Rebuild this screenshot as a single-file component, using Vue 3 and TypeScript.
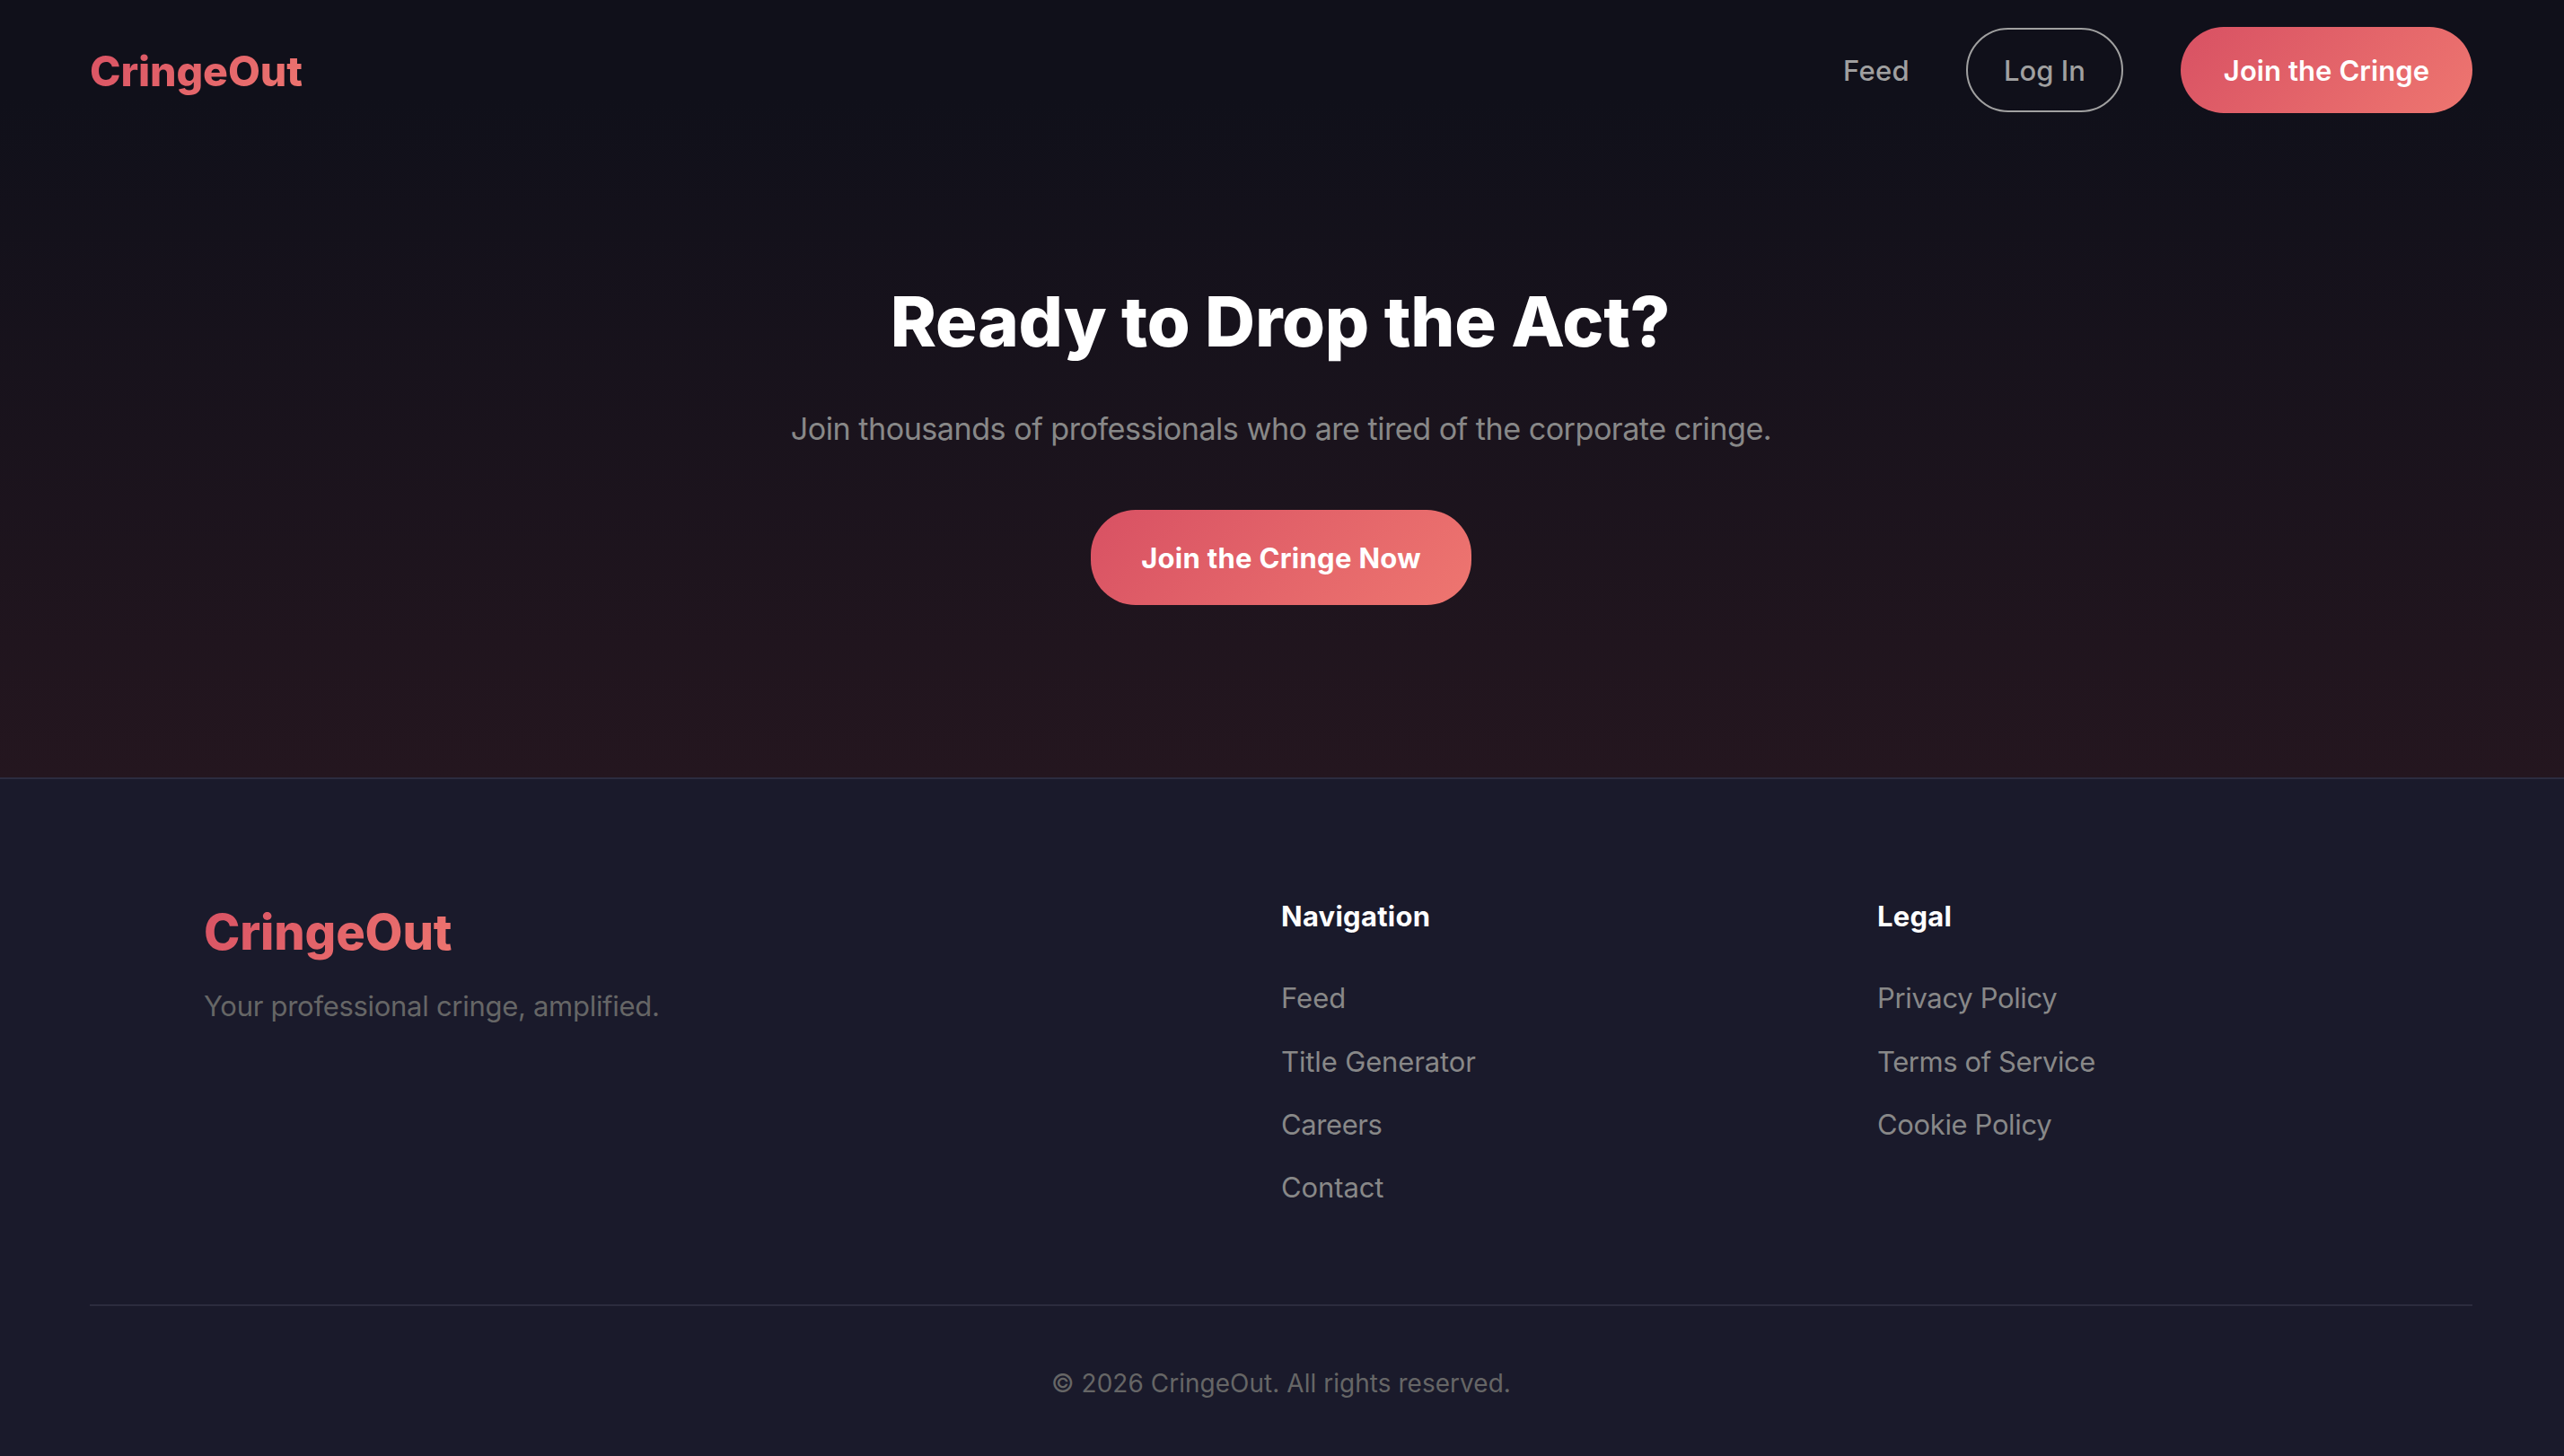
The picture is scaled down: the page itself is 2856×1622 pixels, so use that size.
<script setup lang="ts">
interface FooterLink {
  label: string
  tracking: number
}
interface FooterColumn {
  title: string
  links: FooterLink[]
}

const columns: FooterColumn[] = [
  {
    title: 'Navigation',
    links: [
      { label: 'Feed', tracking: 0.05 },
      { label: 'Title Generator', tracking: -0.13 },
      { label: 'Careers', tracking: -0.4 },
      { label: 'Contact', tracking: -0.1 },
    ],
  },
  {
    title: 'Legal',
    links: [
      { label: 'Privacy Policy', tracking: -0.34 },
      { label: 'Terms of Service', tracking: -0.42 },
      { label: 'Cookie Policy', tracking: -0.36 },
    ],
  },
]
</script>

<template>
  <div class="page">
    <div class="top">
      <nav class="nav">
        <a class="logo">CringeOut</a>
        <div class="nav-links">
          <a class="nav-link">Feed</a>
          <a class="login">Log In</a>
          <a class="join">Join the Cringe</a>
        </div>
      </nav>
      <section class="hero">
        <h2 class="hero-title">Ready to Drop the Act?</h2>
        <p class="hero-text">Join thousands of professionals who are tired of the corporate cringe.</p>
        <a class="cta">Join the Cringe Now</a>
      </section>
    </div>

    <footer class="footer">
      <div class="footer-grid">
        <div class="brand">
          <div class="logo footer-logo">CringeOut</div>
          <p class="tagline">Your professional cringe, amplified.</p>
        </div>
        <div v-for="column in columns" :key="column.title">
          <h4 class="column-title">{{ column.title }}</h4>
          <ul class="links">
            <li v-for="link in column.links" :key="link.label">
              <a :style="{ letterSpacing: link.tracking + 'px' }">{{ link.label }}</a>
            </li>
          </ul>
        </div>
      </div>
      <div class="footer-bottom">
        <p class="copyright">© 2026 CringeOut. All rights reserved.</p>
      </div>
    </footer>
  </div>
</template>

<style>
body {
  margin: 0;
  background: #1a1a2b;
}
</style>

<style scoped>
.page {
  box-sizing: border-box;
  min-height: 1622px;
  display: flex;
  flex-direction: column;
  font-family: Inter, 'Liberation Sans', sans-serif;
  color: #fff;
  background: #1a1a2b;
}
h2,
h4,
p,
ul {
  margin: 0;
  padding: 0;
}
.top {
  height: 866px;
  background: linear-gradient(180deg, #10101a 110px, #24161f 100%);
}
.nav {
  box-sizing: border-box;
  height: 156px;
  padding: 0 102px 0 100px;
  display: flex;
  align-items: center;
  justify-content: space-between;
}
.logo {
  font-size: 46.5px;
  font-weight: 800;
  line-height: 76px;
  letter-spacing: -0.12px;
  background: linear-gradient(135deg, #d85163 0%, #ee7670 100%);
  -webkit-background-clip: text;
  background-clip: text;
  color: transparent;
}
.nav > .logo {
  padding-top: 1px;
}
.nav-links {
  display: flex;
  align-items: center;
  font-size: 31px;
  font-weight: 500;
  color: #a0a0a0;
}
.nav-link {
  margin-right: 63px;
  line-height: 53px;
  padding-top: 1px;
  letter-spacing: 0.3px;
}
.login {
  box-sizing: border-box;
  width: 175px;
  height: 94px;
  margin-right: 64px;
  border: 2px solid #a0a0a0;
  border-radius: 50px;
  line-height: 91px;
  text-align: center;
}
.join {
  width: 325px;
  height: 96px;
  line-height: 97px;
  border-radius: 50px;
  text-align: center;
  font-weight: 600;
  letter-spacing: 0.08px;
  color: #fff;
  background: linear-gradient(135deg, #d85163 0%, #ee7670 100%);
}
.hero {
  padding: 154px 2px 0 0;
  display: flex;
  flex-direction: column;
  align-items: center;
}
.hero-title {
  padding-right: 2px;
  font-size: 77.6px;
  font-weight: 800;
  line-height: 96px;
  letter-spacing: -0.28px;
}
.hero-text {
  margin-top: 44px;
  font-size: 34.2px;
  line-height: 56px;
  letter-spacing: -0.53px;
  color: #888;
}
.cta {
  width: 424px;
  height: 106px;
  margin-top: 62px;
  border-radius: 50px;
  text-align: center;
  font-size: 31px;
  font-weight: 700;
  line-height: 107px;
  letter-spacing: 0.29px;
  background: linear-gradient(135deg, #d85163 0%, #ee7670 100%);
}
.footer {
  flex: 1;
  padding: 127px 102px 0 100px;
  border-top: 2px solid #2c2c40;
}
.footer-grid {
  width: 2400px;
  height: 458px;
  margin: 0 auto;
  display: grid;
  grid-template-columns: 2fr 1fr 1fr;
  column-gap: 128px;
}
.brand {
  display: flex;
  flex-direction: column;
  align-items: flex-start;
}
.footer-logo {
  margin-top: 1px;
  font-size: 54.3px;
  line-height: 84px;
  letter-spacing: -0.16px;
}
.tagline {
  margin-top: 15px;
  font-size: 31px;
  line-height: 51px;
  letter-spacing: -0.29px;
  color: #666;
}
.column-title {
  font-size: 31px;
  font-weight: 700;
  line-height: 51px;
  letter-spacing: 0.25px;
}
.links {
  margin-top: 40.4px;
  display: flex;
  flex-direction: column;
  gap: 19.2px;
  list-style: none;
  font-size: 31px;
  line-height: 51px;
  color: #888;
}
.footer-bottom {
  border-top: 2px solid #2c2c3e;
  padding-top: 62px;
  text-align: center;
}
.copyright {
  font-size: 27.9px;
  line-height: 48px;
  letter-spacing: 0.08px;
  color: #666;
}
</style>
